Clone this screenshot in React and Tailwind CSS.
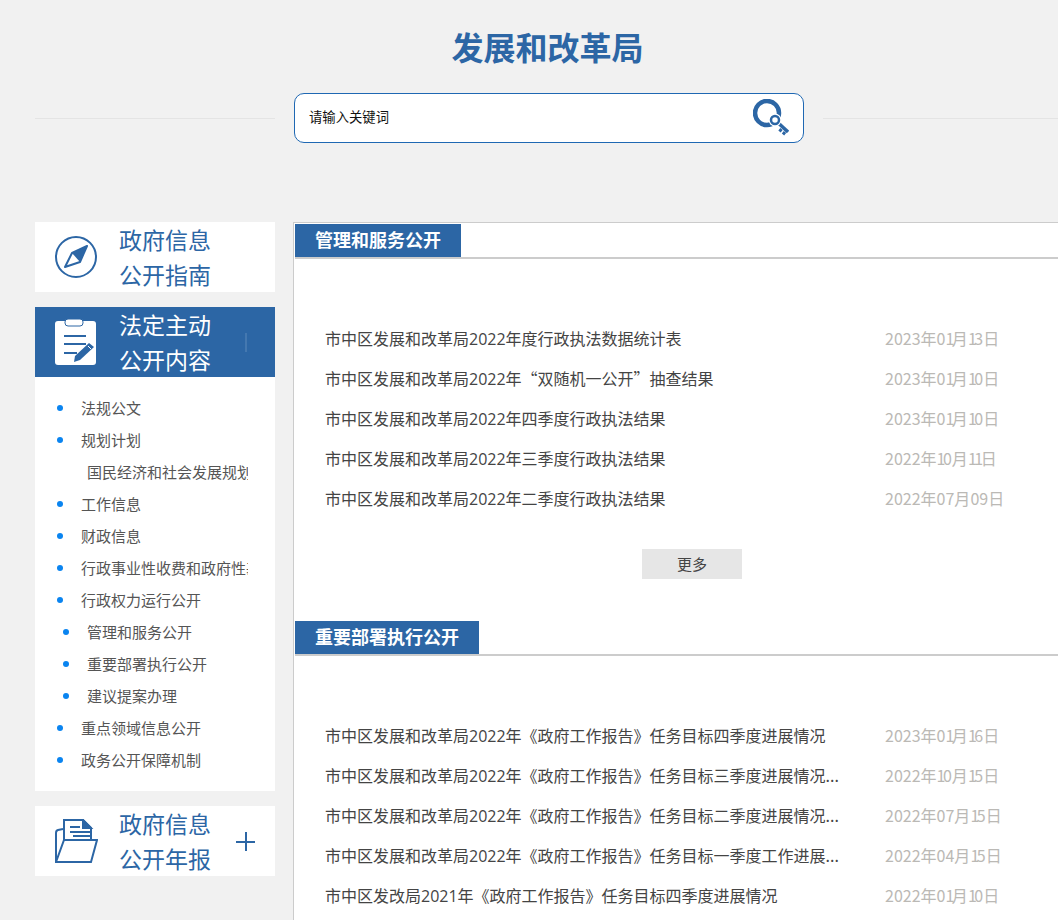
const cjk = 'font-["Microsoft_YaHei","Noto_Sans_CJK_SC",sans-serif]';

const list1 = [
  ['市中区发展和改革局2022年度行政执法数据统计表', '2023年01月13日'],
  ['市中区发展和改革局2022年“双随机一公开”抽查结果', '2023年01月10日'],
  ['市中区发展和改革局2022年四季度行政执法结果', '2023年01月10日'],
  ['市中区发展和改革局2022年三季度行政执法结果', '2022年10月11日'],
  ['市中区发展和改革局2022年二季度行政执法结果', '2022年07月09日'],
];

const list2 = [
  ['市中区发展和改革局2022年《政府工作报告》任务目标四季度进展情况', '2023年01月16日'],
  ['市中区发展和改革局2022年《政府工作报告》任务目标三季度进展情况...', '2022年10月15日'],
  ['市中区发展和改革局2022年《政府工作报告》任务目标二季度进展情况...', '2022年07月15日'],
  ['市中区发展和改革局2022年《政府工作报告》任务目标一季度工作进展...', '2022年04月15日'],
  ['市中区发改局2021年《政府工作报告》任务目标四季度进展情况', '2022年01月10日'],
];

const menu = [
  ['法规公文', 1, 81],
  ['规划计划', 1, 81],
  ['国民经济和社会发展规划', 0, 87],
  ['工作信息', 1, 81],
  ['财政信息', 1, 81],
  ['行政事业性收费和政府性基金', 1, 81],
  ['行政权力运行公开', 1, 81],
  ['管理和服务公开', 2, 87],
  ['重要部署执行公开', 2, 87],
  ['建议提案办理', 2, 87],
  ['重点领域信息公开', 1, 81],
  ['政务公开保障机制', 1, 81],
];

// digits in the titles run a bit wider than the CJK font's own
function Title({ text }) {
  return text.split(/(\d+)/).map((part, i) =>
    i % 2 ? <span key={i} className="font-['Open_Sans']">{part}</span> : part
  );
}

// the 1 is narrower than the other digits in the dates
function DateText({ text }) {
  return text.split('').map((c, i) =>
    c === '1' ? <span key={i} className="tracking-[-2.5px]">{c}</span> : c
  );
}

function Compass() {
  return (
    <svg width="42" height="42" viewBox="0 0 42 42" fill="none">
      <circle cx="21" cy="21" r="20" stroke="#2c66a5" strokeWidth="2" />
      <path d="M32 10 L17 17 L10 31 L25 26 Z" stroke="#2c66a5" strokeWidth="2" strokeLinejoin="round" />
      <path d="M32 10 L17 17 L25 26 Z" fill="#2c66a5" />
    </svg>
  );
}

function Clipboard() {
  return (
    <svg width="41" height="46" viewBox="0 0 41 46" fill="none">
      <rect x="0" y="2" width="41" height="44" rx="3" fill="#fff" />
      <rect x="10" y="0" width="18" height="7" rx="3" fill="#fff" stroke="#2c66a5" strokeWidth="1" />
      <path d="M9 17 H31 M9 25 H31 M9 34 H22" stroke="#2c66a5" strokeWidth="2" />
      <path d="M19 43 L20 37 L34 24 L39 28 L25 41 Z" fill="#2c66a5" />
      <path d="M33 27 L36 30" stroke="#fff" strokeWidth="1" />
    </svg>
  );
}

function Folder() {
  return (
    <svg width="43" height="45" viewBox="0 0 43 45" fill="none" stroke="#2c66a5" strokeWidth="2">
      <path d="M9 21 V1 H28 L36 9 V21" />
      <path d="M28 1 V9 H36 Z" fill="#2c66a5" />
      <path d="M15 8 H25 M15 13 H35 M18 17 H35" />
      <path d="M8 10 L3 11 Q1 11.5 1 14 V43 H36 L42 21 H9 L1 43" strokeLinejoin="miter" />
    </svg>
  );
}

function KeySearch() {
  return (
    <svg width="36" height="38" viewBox="0 0 36 38" fill="none">
      <circle cx="14" cy="14" r="12" stroke="#2c66a5" strokeWidth="4.5" />
      <path d="M22 21 L35 33" stroke="#2c66a5" strokeWidth="3.5" />
      <path d="M28.5 30 L26.5 32.5 M32 33 L30 35.5" stroke="#2c66a5" strokeWidth="3" />
      <circle cx="22" cy="21" r="6.5" fill="#fff" />
      <circle cx="22" cy="21" r="4" fill="#fff" stroke="#2c66a5" strokeWidth="2.5" />
    </svg>
  );
}

function NavCard({ icon, lines, active, plus }) {
  return (
    <div className={`flex h-[70px] items-center overflow-hidden ${active ? 'bg-[#2c66a5] text-white' : 'bg-white text-[#2c66a5]'}`}>
      <div className="ml-5 flex w-[64px] shrink-0">{icon}</div>
      <div className="w-[100px] shrink-0 text-[23px] leading-[35px]">
        <div>{lines[0]}</div>
        <div>{lines[1]}</div>
      </div>
      {plus && (
        <div className="relative ml-[17px] mt-[1px] h-[19px] w-[19px]">
          <div className="absolute left-0 top-[9px] h-[2px] w-[19px] bg-[#2c66a5]" />
          <div className="absolute left-[9px] top-0 h-[19px] w-[2px] bg-[#2c66a5]" />
        </div>
      )}
      {active && <div className="ml-[26px] h-[19px] w-[2px] bg-[#4478b0]" />}
    </div>
  );
}

function Section({ title, items, more, tabW }) {
  return (
    <div>
      <div className="border-b-2 border-[#cccccc]">
        <div className={`h-[33px] bg-[#2c66a5] pl-5 text-[18px] font-bold leading-[31px] text-white ${tabW}`}>{title}</div>
      </div>
      <div className="pl-[30px] pt-[59px]">
        {items.map(([t, d]) => (
          <div key={t} className="flex h-10 items-center text-base text-[#444444]">
            <div className="w-[560px] shrink-0 whitespace-nowrap"><Title text={t} /></div>
            <div className="whitespace-nowrap text-[#bbb9b5]"><DateText text={d} /></div>
          </div>
        ))}
      </div>
      {more ? (
        <div className="mt-[31px] flex justify-center pb-[42px]">
          <div className="h-[30px] w-[100px] bg-[#e6e6e6] text-center text-[15px] leading-[30px] text-[#444444]">更多</div>
        </div>
      ) : (
        <div className="h-10" />
      )}
    </div>
  );
}

export default function App() {
  return (
    <div className={`h-[920px] w-[1058px] overflow-hidden bg-[#f1f1f1] ${cjk}`}>
      <h1 className="pl-[37px] pt-[23px] text-center text-[32px] font-bold leading-[46px] text-[#2c66a5]">发展和改革局</h1>
      <div className="mt-[24px] flex items-center">
        <div className="ml-[35px] h-px w-[240px] bg-[#e4e4e4]" />
        <div className="ml-[19px] flex h-[50px] w-[510px] items-center justify-between rounded-[10px] border border-[#1f68b3] bg-white pl-[14px] pr-[14px]">
          <span className="-mt-[2px] text-[13.33px] text-[#111111]">请输入关键词</span>
          <KeySearch />
        </div>
        <div className="ml-[19px] h-px flex-1 bg-[#e4e4e4]" />
      </div>
      <div className="mt-[79px] flex items-start">
        <aside className="ml-[35px] flex w-[240px] shrink-0 flex-col gap-[15px]">
          <NavCard icon={<Compass />} lines={['政府信息', '公开指南']} />
          <div>
            <NavCard active icon={<Clipboard />} lines={['法定主动', '公开内容']} />
            <ul className="bg-white pb-[15px] pt-[15px]">
              {menu.map(([t, dot, x]) => (
                <li key={t} className="relative h-8 text-[15px] leading-8 text-[#555555]">
                  {dot > 0 && (
                    <span className={`absolute top-[13px] h-[6px] w-[6px] rounded-full bg-[#0a84f0] ${dot === 2 ? 'left-[28px]' : 'left-[22px]'}`} />
                  )}
                  <div className={`overflow-hidden whitespace-nowrap ${x === 87 ? 'ml-[52px] w-[161px]' : 'ml-[46px] w-[167px]'}`}>{t}</div>
                </li>
              ))}
            </ul>
          </div>
          <NavCard plus icon={<Folder />} lines={['政府信息', '公开年报']} />
        </aside>
        <main className="ml-[18px] w-[797px] shrink-0 border border-[#cccccc] bg-white pl-px pt-px">
          <Section title="管理和服务公开" items={list1} more tabW="w-[166px]" />
          <Section title="重要部署执行公开" items={list2} tabW="w-[184px]" />
        </main>
      </div>
    </div>
  );
}
